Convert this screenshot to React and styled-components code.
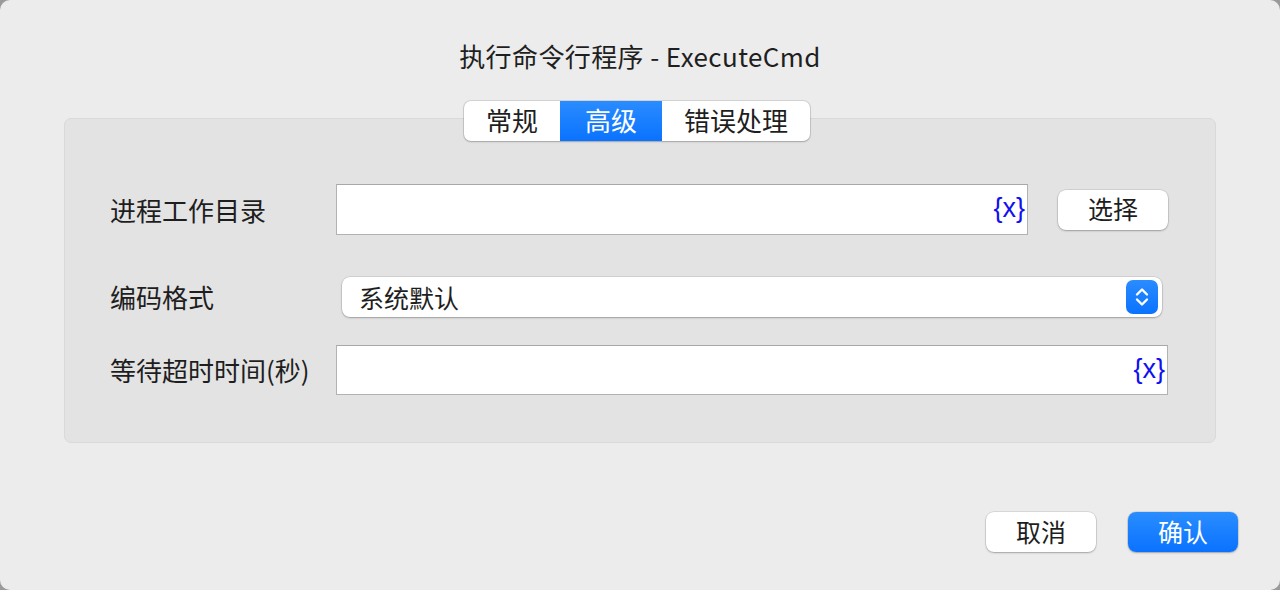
import React, { useState } from 'react';
import styled, { createGlobalStyle } from 'styled-components';

const GlobalStyle = createGlobalStyle`
  html, body {
    margin: 0;
    padding: 0;
    background: #9a9a9a;
  }
  * {
    box-sizing: border-box;
  }
`;

const FONT = `"Noto Sans CJK SC", "Liberation Sans", sans-serif`;

const Window = styled.div`
  width: 1280px;
  height: 590px;
  background: #ececec;
  border-radius: 10px;
  display: flex;
  flex-direction: column;
  font-family: ${FONT};
  color: #1e1e1e;
  overflow: hidden;
`;

const Title = styled.div`
  margin-top: 39px;
  height: 34px;
  line-height: 34px;
  text-align: center;
  font-size: 26px;
  letter-spacing: 0.4px;
  color: #1f1f1f;
`;

const TabBar = styled.div`
  position: relative;
  z-index: 1;
  align-self: center;
  margin-top: 28px;
  margin-bottom: -23px;
  margin-left: -6px;
  display: flex;
  height: 40px;
  background: #fff;
  border-radius: 7px;
  box-shadow: 0 0 0 1px rgba(0, 0, 0, 0.1), 0 1px 2px rgba(0, 0, 0, 0.2);
  overflow: hidden;
`;

const Tab = styled.button`
  width: ${p => p.$w}px;
  border: none;
  margin: 0;
  padding: 0 0 2px;
  font-family: ${FONT};
  font-size: 26px;
  line-height: 38px;
  color: ${p => (p.$active ? '#fff' : '#1e1e1e')};
  background: ${p => (p.$active ? 'linear-gradient(#2a8cff, #0a72ff)' : 'transparent')};
  cursor: pointer;
`;

const Group = styled.div`
  margin: 0 64px;
  height: 325px;
  background: #e3e3e3;
  border: 1px solid #d9d9d9;
  border-radius: 7px;
  padding: 65px 47px 0 45px;
  display: flex;
  flex-direction: column;
`;

const Row = styled.div`
  display: flex;
  align-items: center;
  height: ${p => p.$h}px;
  margin-top: ${p => p.$mt || 0}px;
`;

const Label = styled.div`
  width: 226px;
  flex-shrink: 0;
  font-size: 26px;
  line-height: 32px;
  color: #1e1e1e;
`;

const Field = styled.div`
  flex: ${p => (p.$width ? `0 0 ${p.$width}px` : 1)};
  height: 100%;
  background: #fff;
  border: 1px solid #b2b2b2;
  border-top-color: #a8a8a8;
  display: flex;
  align-items: center;
  justify-content: flex-end;
  padding-right: 2px;
`;

const VarMark = styled.span`
  font-family: "Liberation Sans", sans-serif;
  font-size: 27px;
  color: #1010f0;
  line-height: 1;
  padding-bottom: 2px;
`;

const Button = styled.button`
  width: 110px;
  height: 40px;
  border: none;
  border-radius: 8px;
  font-family: ${FONT};
  font-size: 25px;
  line-height: 36px;
  color: ${p => (p.$primary ? '#fff' : '#1e1e1e')};
  background: ${p => (p.$primary ? 'linear-gradient(#2a8dff, #0a72ff)' : '#fff')};
  box-shadow: 0 0 0 0.5px rgba(0, 0, 0, 0.15), 0 1px 2px rgba(0, 0, 0, 0.25);
  cursor: pointer;
  padding: 0 0 3px;
`;

const SideButton = styled(Button)`
  margin-left: 30px;
`;

const Select = styled.div`
  flex: 1;
  height: 40px;
  margin: 0 6px;
  background: #fff;
  border-radius: 8px;
  box-shadow: 0 0 0 0.5px rgba(0, 0, 0, 0.15), 0 1px 2px rgba(0, 0, 0, 0.25);
  display: flex;
  align-items: center;
  justify-content: space-between;
  padding: 0 4px 0 17px;
  font-size: 25px;
`;

const Stepper = styled.div`
  width: 32px;
  height: 34px;
  border-radius: 7px;
  background: linear-gradient(#2a8cff, #0a72ff);
  display: flex;
  align-items: center;
  justify-content: center;
`;

const Footer = styled.div`
  margin-top: 69px;
  padding-right: 42px;
  display: flex;
  justify-content: flex-end;
  gap: 32px;
`;

const StepperIcon = () => (
  <svg width="18" height="24" viewBox="0 0 18 24">
    <path d="M4 9.5 L9 4.5 L14 9.5" fill="none" stroke="#fff" strokeWidth="2.4" strokeLinecap="round" strokeLinejoin="round" />
    <path d="M4 14.5 L9 19.5 L14 14.5" fill="none" stroke="#fff" strokeWidth="2.4" strokeLinecap="round" strokeLinejoin="round" />
  </svg>
);

const tabs = [
  { key: 'general', label: '常规', w: 96 },
  { key: 'advanced', label: '高级', w: 102 },
  { key: 'error', label: '错误处理', w: 148 },
];

const App = () => {
  const [active, setActive] = useState('advanced');

  return (
    <>
      <GlobalStyle />
      <Window>
        <Title>执行命令行程序 - ExecuteCmd</Title>
        <TabBar>
          {tabs.map(t => (
            <Tab key={t.key} $w={t.w} $active={active === t.key} onClick={() => setActive(t.key)}>
              {t.label}
            </Tab>
          ))}
        </TabBar>
        <Group>
          <Row $h={51}>
            <Label>进程工作目录</Label>
            <Field $width={692}>
              <VarMark>{'{x}'}</VarMark>
            </Field>
            <SideButton>选择</SideButton>
          </Row>
          <Row $h={40} $mt={42}>
            <Label>编码格式</Label>
            <Select>
              <span>系统默认</span>
              <Stepper>
                <StepperIcon />
              </Stepper>
            </Select>
          </Row>
          <Row $h={50} $mt={28}>
            <Label>等待超时时间(秒)</Label>
            <Field>
              <VarMark>{'{x}'}</VarMark>
            </Field>
          </Row>
        </Group>
        <Footer>
          <Button>取消</Button>
          <Button $primary>确认</Button>
        </Footer>
      </Window>
    </>
  );
};

export default App;
